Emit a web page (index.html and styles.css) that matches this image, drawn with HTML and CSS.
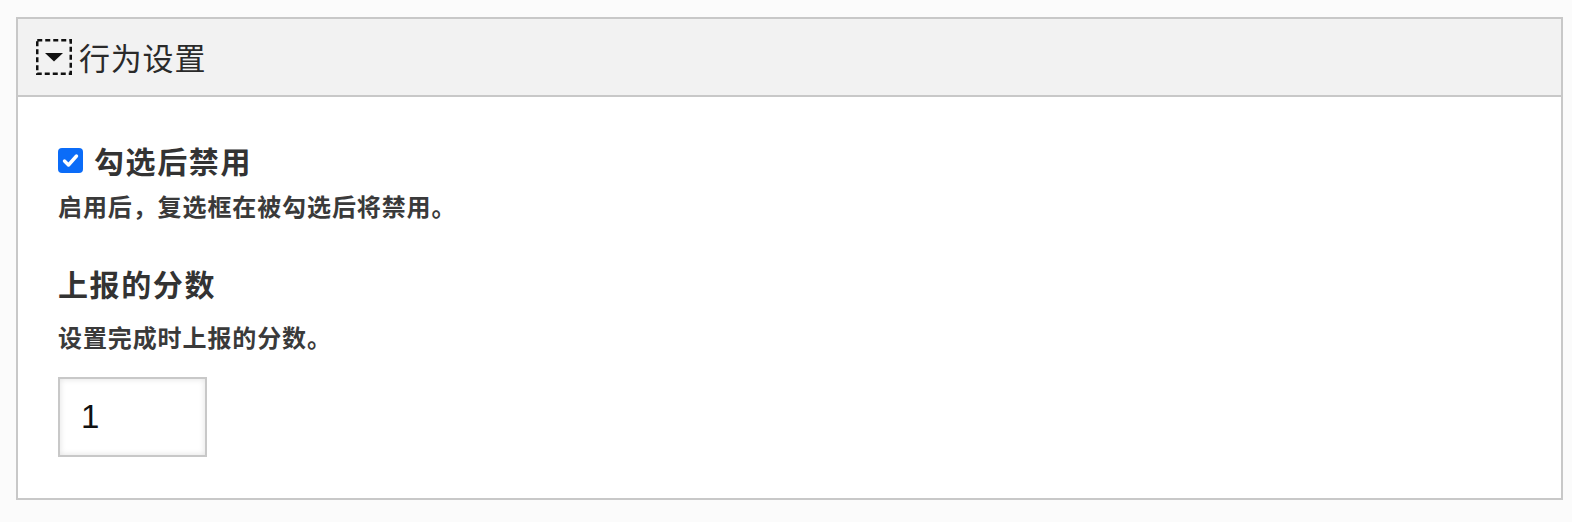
FILE: index.html
```html
<!DOCTYPE html>
<html lang="zh-CN">
<head>
<meta charset="utf-8">
<title>行为设置</title>
<link rel="stylesheet" href="styles.css">
</head>
<body>
<section class="panel">
  <header class="panel-head">
    <button class="toggle" aria-label="折叠">
      <svg width="36" height="36" viewBox="0 0 36 36">
        <rect x="1.25" y="1.25" width="33.5" height="33.5" fill="none" stroke="#111" stroke-width="2.5" stroke-dasharray="5 3"/>
        <polygon points="9,14 27,14 18,22.5" fill="#111"/>
      </svg>
    </button>
    <h2 class="panel-title">行为设置</h2>
  </header>
  <div class="panel-body">
    <label class="check-row">
      <input type="checkbox" class="check" checked>
      <span class="check-label">勾选后禁用</span>
    </label>
    <p class="help">启用后，复选框在被勾选后将禁用。</p>
    <h3 class="field-title">上报的分数</h3>
    <p class="help help-second">设置完成时上报的分数。</p>
    <input class="num" type="text" value="1">
  </div>
</section>
</body>
</html>
```

FILE: styles.css
```css
html, body {
  margin: 0;
  padding: 0;
  background: #fbfbfb;
}
body {
  padding: 17px 9px 22px 16px;
  font-family: "Noto Sans CJK SC", "Noto Sans", sans-serif;
  color: #333;
}
.panel {
  border: 2px solid #c8c8c8;
  background: #fff;
}
.panel-head {
  height: 76px;
  background: #f2f2f2;
  border-bottom: 2px solid #c8c8c8;
  display: flex;
  align-items: center;
  padding-left: 18px;
  gap: 7px;
}
.toggle {
  width: 36px;
  height: 36px;
  padding: 0;
  margin: 0;
  border: 0;
  background: transparent;
  display: block;
  flex: none;
}
.toggle svg { display: block; }
.panel-title {
  margin: 0;
  font-size: 31px;
  font-weight: 400;
  line-height: 36px;
  letter-spacing: 0.8px;
  color: #2a2a2a;
}
.panel-body {
  padding: 45px 40px 41px 40px;
}
.check-row {
  display: flex;
  align-items: center;
  gap: 11px;
  height: 36px;
}
.check {
  appearance: none;
  -webkit-appearance: none;
  margin: 0;
  width: 25px;
  height: 25px;
  border-radius: 4px;
  background: #0b6cf8 url("data:image/svg+xml;utf8,<svg xmlns='http://www.w3.org/2000/svg' viewBox='0 0 25 25'><path d='M6.5 13 L10.5 17 L18.5 8' fill='none' stroke='white' stroke-width='3.4' stroke-linecap='round' stroke-linejoin='round'/></svg>") center/100% 100% no-repeat;
}
.check-label {
  font-size: 30px;
  font-weight: 700;
  line-height: 36px;
  letter-spacing: 1.6px;
  color: #333;
}
.help {
  margin: 12px 0 0 0;
  font-size: 24px;
  line-height: 32px;
  font-weight: 700;
  letter-spacing: 0.9px;
  color: #3a3a3a;
}
.field-title {
  margin: 43px 0 0 0;
  font-size: 30px;
  line-height: 36px;
  font-weight: 700;
  letter-spacing: 1.6px;
  color: #333;
}
.help-second {
  margin-top: 20px;
}
.num {
  display: block;
  margin-top: 24px;
  box-sizing: border-box;
  width: 149px;
  height: 80px;
  border: 2px solid #c8c8c8;
  box-shadow: inset 0 0 6px rgba(0,0,0,0.12);
  padding: 0 0 0 21px;
  font-family: "Liberation Sans", Arial, sans-serif;
  font-size: 33px;
  color: #111;
  background: #fff;
  outline: none;
}
```
